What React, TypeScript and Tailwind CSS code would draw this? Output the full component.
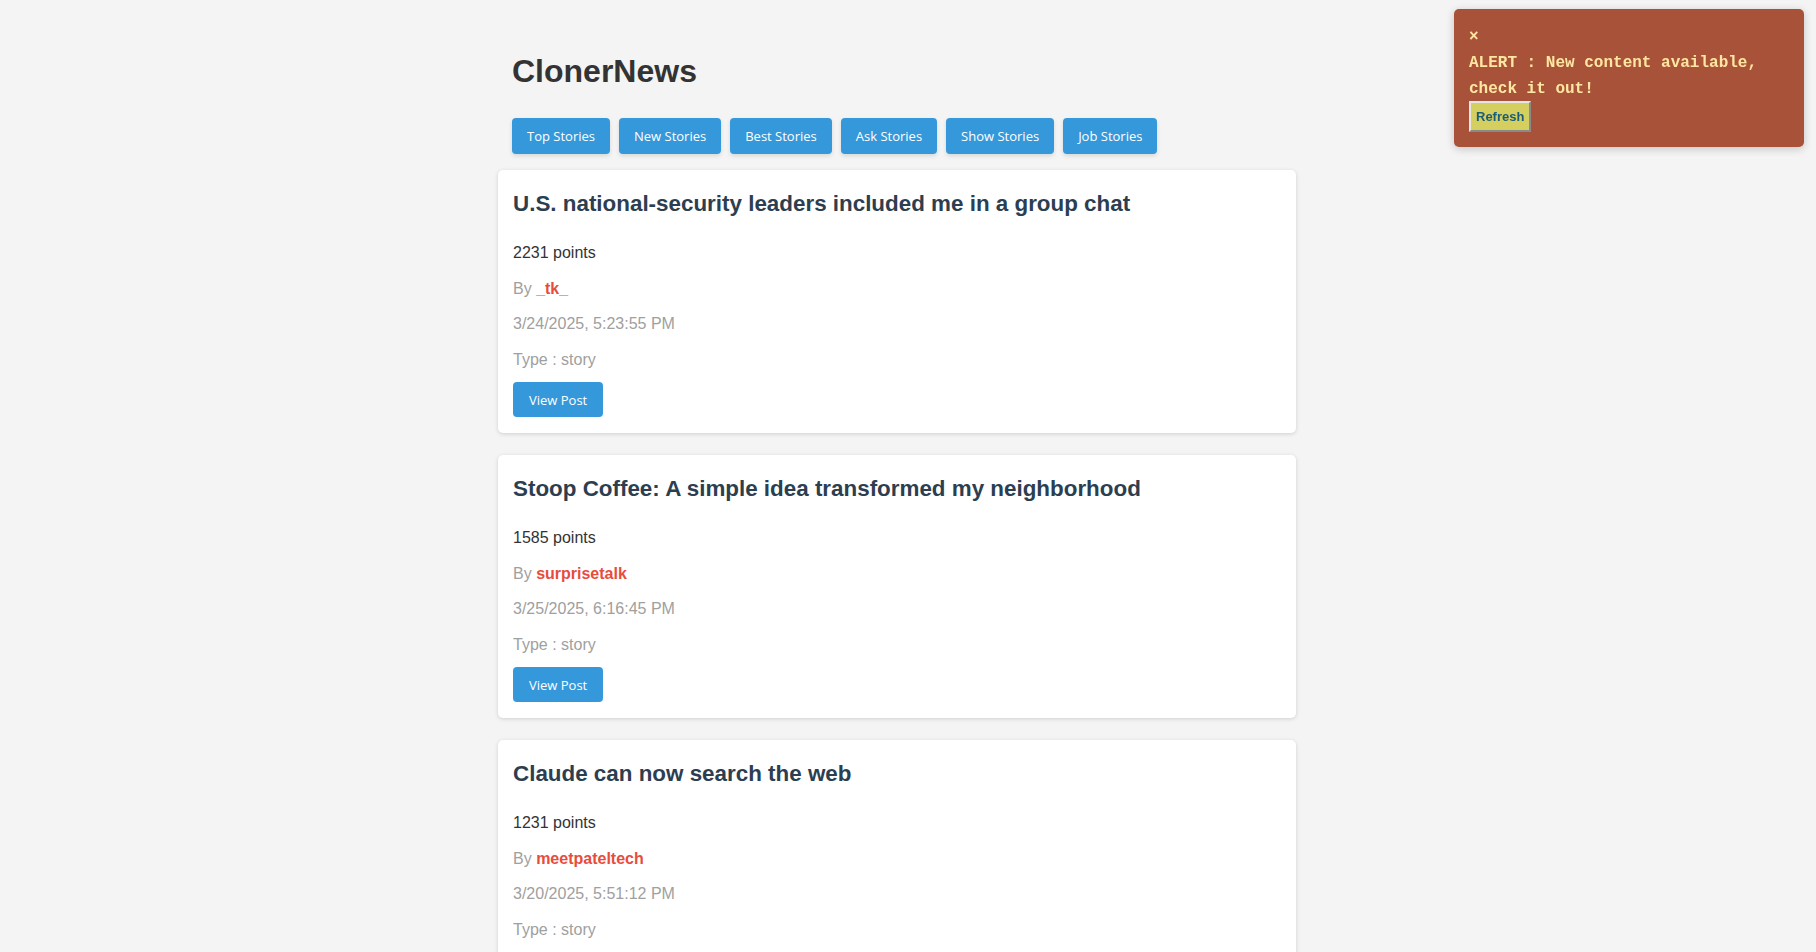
import React from "react";

type Story = {
  title: string;
  points: number;
  by: string;
  time: string;
  type: string;
};

const stories: Story[] = [
  {
    title: "U.S. national-security leaders included me in a group chat",
    points: 2231,
    by: "_tk_",
    time: "3/24/2025, 5:23:55 PM",
    type: "story",
  },
  {
    title: "Stoop Coffee: A simple idea transformed my neighborhood",
    points: 1585,
    by: "surprisetalk",
    time: "3/25/2025, 6:16:45 PM",
    type: "story",
  },
  {
    title: "Claude can now search the web",
    points: 1231,
    by: "meetpateltech",
    time: "3/20/2025, 5:51:12 PM",
    type: "story",
  },
  {
    title: "Gemini 2.5",
    points: 1080,
    by: "meetpateltech",
    time: "3/25/2025, 5:01:43 PM",
    type: "story",
  },
];

const navItems = [
  "Top Stories",
  "New Stories",
  "Best Stories",
  "Ask Stories",
  "Show Stories",
  "Job Stories",
];

function StoryCard({ s }: { s: Story }) {
  return (
    <div className="w-[798px] bg-white rounded-[5px] shadow-[0_1px_4px_rgba(0,0,0,0.15)] px-[15px] pt-[14px] pb-[16px] flex flex-col">
      <h2 className="text-[22.4px] leading-[40px] font-bold text-[#2c3e50]">{s.title}</h2>
      <div className="mt-[11px] flex flex-col text-[16px] leading-[35.5px]">
        <p className="text-[#333333]">{s.points} points</p>
        <p className="text-[#a0a0a0]">
          By <span className="font-bold text-[#e74c3c]">{s.by}</span>
        </p>
        <p className="text-[#a0a0a0]">{s.time}</p>
        <p className="text-[#a0a0a0]">Type : {s.type}</p>
      </div>
      <div className="mt-[5px]">
        <button
          className="h-[35px] px-[16px] rounded-[4px] bg-[#3498db] text-white text-[13px] leading-[16px]"
          style={{ fontFamily: '"Open Sans", "Noto Sans", sans-serif' }}
        >
          View Post
        </button>
      </div>
    </div>
  );
}

export default function App() {
  return (
    <div
      className="h-[952px] w-full overflow-hidden bg-[#f4f4f4]"
      style={{ fontFamily: '"Liberation Sans", Arial, sans-serif' }}
    >
      <div className="mx-auto w-[820px] pt-[51px]">
        <div className="px-[14px]">
          <h1 className="text-[32px] leading-[40px] font-bold text-[#333333]">ClonerNews</h1>
          <nav className="mt-[27px] flex gap-[9px]">
            {navItems.map((n) => (
              <button
                key={n}
                className="h-[36px] px-[15px] rounded-[4px] bg-[#3498db] text-white text-[13px] leading-[16px] shadow-[0_2px_4px_rgba(0,0,0,0.12)]"
                style={{ fontFamily: '"Open Sans", "Noto Sans", sans-serif' }}
              >
                {n}
              </button>
            ))}
          </nav>
        </div>
        <div className="mt-[16px] flex flex-col gap-[22px]">
          {stories.map((s) => (
            <StoryCard key={s.title} s={s} />
          ))}
        </div>
      </div>

      <div
        className="fixed top-[9px] right-[12px] w-[350px] rounded-[5px] bg-[#a9523a] shadow-[0_2px_8px_rgba(0,0,0,0.2)] px-[15px] pt-[15px] pb-[15px] text-[#ffe6a1]"
        style={{ fontFamily: '"Liberation Mono", "Courier New", monospace' }}
      >
        <div className="text-[16px] leading-[26px] font-bold cursor-pointer">×</div>
        <p className="text-[16px] leading-[26px] font-bold">
          ALERT : New content available, check it out!
        </p>
        <button
          className="-mt-[1px] h-[31px] px-[5px] bg-[#d5cf5f] text-[#1b5c78] text-[13px] font-bold border-2 border-t-[#e6e6e6] border-l-[#e6e6e6] border-b-[#8a8a8a] border-r-[#8a8a8a]"
          style={{ fontFamily: '"Liberation Sans", Arial, sans-serif' }}
        >
          Refresh
        </button>
      </div>
    </div>
  );
}
